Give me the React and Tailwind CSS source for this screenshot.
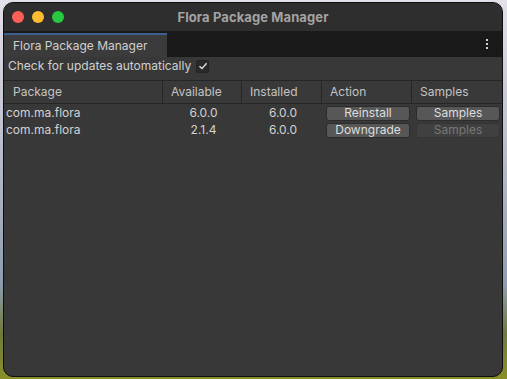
import React from "react";

function Btn({ children, disabled }) {
  return (
    <div
      className={
        "h-[15px] flex items-center justify-center rounded-[3px] border text-[12px] leading-none " +
        (disabled
          ? "bg-[#404040] border-[#353535] text-[#777777]"
          : "bg-[#575757] border-[#2c2c2c] text-[#dedede]")
      }
    >
      {children}
    </div>
  );
}

export default function App() {
  const rows = [
    { name: "com.ma.flora", avail: "6.0.0", inst: "6.0.0", action: "Reinstall", samplesDisabled: false },
    { name: "com.ma.flora", avail: "2.1.4", inst: "6.0.0", action: "Downgrade", samplesDisabled: true },
  ];
  return (
    <div
      className="w-[507px] h-[379px] overflow-hidden pl-[3px] pr-[4px] pt-[2px] pb-[2px] bg-[linear-gradient(180deg,#e4e0ea_0%,#b9bccb_40%,#8d9db0_75%,#6f7a3a_88%,#8a8f2a_100%)]"
      style={{ fontFamily: "Inter, 'Liberation Sans', sans-serif" }}
    >
      <div className="w-full h-full rounded-[10px] border border-[#0e0e0e] bg-[#383838] overflow-hidden flex flex-col">
        {/* title bar */}
        <div className="relative h-[28px] shrink-0 bg-[#2e2e2e] flex items-center justify-center">
          <div className="absolute left-[8px] top-[8px] flex gap-[8px]">
            <div className="w-[12px] h-[12px] rounded-full bg-[#fe5f57]" />
            <div className="w-[12px] h-[12px] rounded-full bg-[#febc2e]" />
            <div className="w-[12px] h-[12px] rounded-full bg-[#28c840]" />
          </div>
          <span className="text-[13px] font-bold text-[#a3a3a3] tracking-[0.1px] pt-[1px]">Flora Package Manager</span>
        </div>
        {/* tab bar */}
        <div className="h-[26px] shrink-0 bg-[#191919] flex items-end justify-between">
          <div className="w-[163px] h-[24px] bg-[#3b3b3b] border-t-2 border-[#3c5f8f] flex items-center pl-[9px] text-[12px] text-[#cfcfcf]">
            Flora Package Manager
          </div>
          <div className="h-full flex flex-col items-center justify-center gap-[2px] pr-[14px]">
            <div className="w-[2px] h-[2px] bg-[#d0d0d0]" />
            <div className="w-[2px] h-[2px] bg-[#d0d0d0]" />
            <div className="w-[2px] h-[2px] bg-[#d0d0d0]" />
          </div>
        </div>
        {/* options */}
        <div className="h-[18px] shrink-0 flex items-center pl-[4px] gap-[5px] text-[12px] text-[#d0d0d0]">
          <span>Check for updates automatically</span>
          <div className="w-[13px] h-[13px] rounded-[2px] bg-[#2a2a2a] border border-[#232323] flex items-center justify-center">
            <svg width="10" height="10" viewBox="0 0 10 10">
              <path d="M1.5 5.2 L4 7.6 L8.6 2.2" fill="none" stroke="#e0e0e0" strokeWidth="1.4" />
            </svg>
          </div>
        </div>
        {/* table */}
        <div className="mt-[5px] border-t border-[#262626] flex flex-col">
          <div className="h-[23px] grid grid-cols-[159px_79px_80px_90px_1fr] border-b border-[#262626] bg-[#393939] text-[12px] text-[#c4c4c4]">
            <div className="flex items-center pl-[9px] border-r border-[#262626]">Package</div>
            <div className="flex items-center pl-[8px] border-r border-[#262626]">Available</div>
            <div className="flex items-center pl-[8px] border-r border-[#262626]">Installed</div>
            <div className="flex items-center pl-[8px] border-r border-[#262626]">Action</div>
            <div className="flex items-center pl-[8px]">Samples</div>
          </div>
          {rows.map((r, i) => (
            <div key={i} className="h-[17px] grid grid-cols-[159px_79px_80px_90px_1fr] text-[12px] text-[#d2d2d2] items-center">
              <div className="pl-[2px]">{r.name}</div>
              <div className="text-center pl-[2px]">{r.avail}</div>
              <div className="text-center pl-[2px]">{r.inst}</div>
              <div className="pl-[4px] pr-[2px]">
                <Btn>{r.action}</Btn>
              </div>
              <div className="pl-[4px] pr-[2px]">
                <Btn disabled={r.samplesDisabled}>Samples</Btn>
              </div>
            </div>
          ))}
        </div>
      </div>
    </div>
  );
}
